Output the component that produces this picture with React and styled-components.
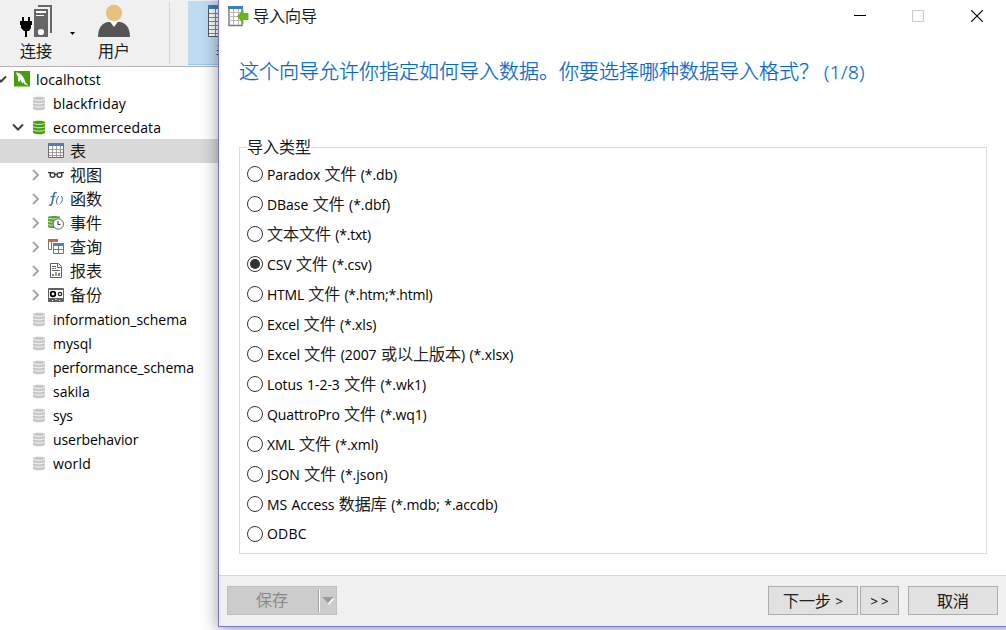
import React from 'react';
import styled, { createGlobalStyle, css } from 'styled-components';

const GlobalStyle = createGlobalStyle`
  * { box-sizing: border-box; }
  html, body { margin: 0; padding: 0; overflow: hidden; }
  body {
    font-family: "Open Sans", "Noto Sans CJK SC", sans-serif;
    font-size: 16px;
    color: #000;
    background: #fff;
  }
  svg { display: block; flex: none; }
`;

const hanWeight = css`
  font-weight: 300;
  -webkit-text-stroke: 0.25px currentColor;
`;

const Desktop = styled.div`
  position: relative;
  width: 1006px;
  height: 630px;
  overflow: hidden;
  background: #fff;
`;

const Toolbar = styled.header`
  display: flex;
  height: 67px;
  background: #f0f0f0;
  border-bottom: 1px solid #b4b4b4;
`;

const ToolButton = styled.div`
  display: flex;
  flex-direction: column;
  align-items: center;
  width: ${(p) => p.$width}px;
  padding-top: 4px;
  padding-left: ${(p) => p.$shift || 0}px;
  flex: none;
  ${(p) => p.$active && css`
    align-items: flex-start;
    height: 64px;
    margin-top: 1px;
    padding: 4px 0 0 20px;
    background: #bfdcf3;
    border-bottom: 1px solid #90c8f6;
  `}
`;

const ToolLabel = styled.span`
  height: 24px;
  margin-top: 1px;
  margin-left: ${(p) => p.$indent || 0}px;
  font-size: 16px;
  ${hanWeight}
  line-height: 24px;
`;

const DropArrow = styled.div`
  width: 10px;
  padding: 32px 0 0 2px;
`;

const Divider = styled.div`
  width: 1px;
  height: 62px;
  margin: 2px 18px 0 19px;
  background: #d5d5d5;
`;

const Tree = styled.nav`
  display: flex;
  flex-direction: column;
`;

const TreeRow = styled.div`
  display: flex;
  align-items: center;
  height: 24px;
  padding-left: ${(p) => p.$depth * 17}px;
  background: ${(p) => (p.$selected ? '#d9d9d9' : 'transparent')};
`;

const Lead = styled.span`
  display: flex;
  justify-content: center;
  width: 15px;
  margin-left: ${(p) => (p.$open ? -7 : -6)}px;
  margin-right: ${(p) => (p.$open ? 6 : 5)}px;
  flex: none;
`;

const IconCell = styled.span`
  display: flex;
  justify-content: center;
  width: 16px;
  margin-right: 6px;
  flex: none;
`;

const TreeLabel = styled.span`
  padding-top: ${(p) => (p.$latin ? 2 : 0)}px;
  font-size: ${(p) => (p.$latin ? 14 : 16)}px;
  ${(p) => !p.$latin && hanWeight}
  letter-spacing: ${(p) => p.$track || 0}px;
  line-height: 22px;
  white-space: nowrap;
`;

const Dialog = styled.section`
  position: absolute;
  left: 218px;
  top: -2px;
  display: flex;
  flex-direction: column;
  width: 800px;
  height: 629px;
  background: #fff;
  border: 1px solid #7575d3;
  box-shadow: 0 3px 16px rgba(0, 0, 0, 0.4);
`;

const TitleBar = styled.div`
  display: flex;
  align-items: flex-start;
  height: 35px;
  padding: 7px 0 0 9px;
`;

const Title = styled.span`
  flex: none;
  width: 600px;
  margin-left: 4px;
  font-size: 16px;
  ${hanWeight}
  line-height: 20px;
`;

const WindowControls = styled.div`
  display: flex;
  gap: 46px;
  margin-left: 1px;
  padding-top: 4px;
  & > :last-child { margin-left: 1px; }
`;

const Heading = styled.h1`
  margin: 22px 0 0 20px;
  height: 32px;
  font-size: 20px;
  ${hanWeight}
  line-height: 32px;
  color: #0066cc;
  white-space: nowrap;
`;

const HeadingStep = styled.span`
  margin-left: 5px;
  font-size: 19px;
  letter-spacing: 0.5px;
`;

const GroupBox = styled.fieldset`
  width: 748px;
  height: 418px;
  margin: 48px 0 0 20px;
  padding: 1px 0 0 7px;
  border: 1px solid #dcdcdc;
`;

const GroupLegend = styled.legend`
  height: 22px;
  padding: 0;
  font-size: 16px;
  ${hanWeight}
  line-height: 22px;
`;

const Option = styled.label`
  display: flex;
  align-items: center;
  height: 30px;
  white-space: nowrap;
`;

const Radio = styled.span`
  display: flex;
  align-items: center;
  justify-content: center;
  width: 16px;
  height: 16px;
  margin-right: 4px;
  flex: none;
  border: 1px solid #333;
  border-radius: 50%;
  background: #fff;
  &::after {
    content: "";
    width: 10px;
    height: 10px;
    border-radius: 50%;
    background: ${(p) => (p.$checked ? '#333' : 'transparent')};
  }
`;

const OptionText = styled.span`
  font-size: 14px;
  line-height: 24px;
  letter-spacing: ${(p) => p.$track || 0}px;
  word-spacing: 0.8px;
  white-space: pre;
`;

const Han = styled.span`
  font-size: 16px;
  ${hanWeight}
  letter-spacing: 0;
`;

const Footer = styled.footer`
  display: flex;
  align-items: flex-start;
  height: 51px;
  margin-top: auto;
  padding: 10px 0 0 8px;
  background: #f0f0f0;
  border-top: 1px solid #d5d5d5;
`;

const Button = styled.div`
  display: flex;
  align-items: center;
  justify-content: center;
  width: ${(p) => p.$width}px;
  height: 29px;
  margin-left: ${(p) => p.$gap || 0}px;
  padding-top: 1px;
  flex: none;
  font-size: 16px;
  ${hanWeight}
  line-height: 27px;
  background: #e1e1e1;
  border: 1px solid #adadad;
  white-space: pre;
`;

const SplitButton = styled(Button)`
  justify-content: flex-start;
  padding-top: 0;
  color: #838383;
  background: #ccc;
  border-color: #bfbfbf;
`;

const SplitLabel = styled.span`
  width: 90px;
  padding-right: 2px;
  text-align: center;
`;

const SplitArrow = styled.span`
  display: flex;
  align-items: center;
  height: 23px;
  padding-left: 3px;
  border-left: 1px solid #a0a0a0;
  box-shadow: inset 1px 0 0 #fff;
`;

const Small = styled.span`
  padding-top: 1px;
  font-size: 13px;
  letter-spacing: ${(p) => p.$track || 0}px;
  margin-right: ${(p) => -(p.$track || 0)}px;
`;

const ConnectIcon = () => (
  <svg width="34" height="34" viewBox="0 0 34 34">
    <path d="M20 1h14v28h-2V3H20z" fill="#666" />
    <path d="M16 5h14v28H16z" fill="#666" />
    <path d="M18 7h10v2H18zM18 11h8v1h-8z" fill="#fff" />
    <circle cx="23" cy="28" r="3.1" fill="#fff" />
    <path d="M4 13h2v4h4v-4h2v4h2v4h-1v3l-2 3H9v6H7v-6H6l-3-3v-3H2v-4h2z" fill="#000" />
  </svg>
);

const UserIcon = () => (
  <svg width="34" height="34" viewBox="0 0 34 34">
    <path d="M1 33c0-9 4-14 10-15h12c6 1 10 6 10 15z" fill="#555" />
    <path d="M12.500 17h9L17 23z" fill="#fff" />
    <circle cx="17" cy="9" r="8.200" fill="#e5c37f" />
  </svg>
);

const BigTableIcon = () => (
  <svg width="34" height="33" viewBox="0 0 34 33">
    <path d="M.5.5h33v31H.5z" fill="#fff" stroke="#555" />
    <path d="M0 0h34v4H0z" fill="#3d7ab5" />
    <path d="M1 8.500h32M1 12.500h32M1 16.500h32M1 20.500h32M1 24.500h32M1 28.500h32M7.500 4v27M15.500 4v27M23.500 4v27" stroke="#888" />
  </svg>
);

const Chevron = ({ open }) =>
  open ? (
    <svg width="12" height="8" viewBox="0 0 12 8">
      <path d="M1 1.500l5 5 5-5" fill="none" stroke="#404040" strokeWidth="2" />
    </svg>
  ) : (
    <svg width="8" height="12" viewBox="0 0 8 12">
      <path d="M1 1l5 5-5 5" fill="none" stroke="#a6a6a6" strokeWidth="2" />
    </svg>
  );

const ServerIcon = () => (
  <svg width="16" height="16" viewBox="0 0 16 16">
    <path d="M0 0h16v15.500H0z" fill="#43a008" />
    <path d="M2 1.500c3 .2 5 1.200 6.500 3.500 1.500 2.200 2.500 4.500 3 6.500l3 3-4-1.200-1-2.300-1 1.500c-1-1.300-1.800-2.500-2-4l-1.500 3C3.800 10 4 8 4.200 6.500 3.500 5 2.500 3.500 2 1.500z" fill="#fff" />
  </svg>
);

const DbIcon = ({ color, line }) => (
  <svg width="12" height="15" viewBox="0 0 12 15">
    <path d="M0 2.300C0 .3 12 .3 12 2.300v10C12 15 0 15 0 12.300z" fill={color} />
    <path d="M0 3.200c1.500 1.600 10.500 1.600 12 0M0 6.500c1.500 1.700 10.500 1.700 12 0M0 9.800c1.500 1.700 10.500 1.700 12 0" fill="none" stroke={line} strokeWidth=".9" />
  </svg>
);

const TableIcon = () => (
  <svg width="16" height="16" viewBox="0 0 16 16">
    <path d="M.5.5h15v14H.5z" fill="#fff" stroke="#6c6c6c" />
    <path d="M0 0h16v3H0z" fill="#4a80bb" />
    <path d="M1 6.500h14M1 9.500h14M1 12.500h14M4.500 3v11M8.500 3v11M12.500 3v11" stroke="#8c8c8c" strokeWidth=".8" />
  </svg>
);

const ViewIcon = () => (
  <svg width="16" height="16" viewBox="0 0 16 16">
    <g fill="none" stroke="#303030" strokeWidth="1.300">
      <circle cx="4.500" cy="8" r="2.400" />
      <circle cx="11.500" cy="8" r="2.400" />
      <path d="M7 7.500q1-.8 2 0M0 5.700h3M16 5.700h-3" />
    </g>
  </svg>
);

const FunctionIcon = () => (
  <svg width="16" height="16" viewBox="0 0 16 16">
    <g fill="none" stroke="#3c6b9e" strokeWidth="1.200">
      <path d="M8.800 2C7 .7 6 2.300 5.600 4.300L4.100 12c-.4 2-1.700 2.800-3 1.700" strokeWidth="1.500" />
      <path d="M2.500 5.500h5" />
      <path d="M10.800 5c-2.300 2.500-2.800 5.500-1.700 8.300M13.300 5c1.800 2.800 1.200 5.700-1.500 8.300" strokeWidth="1" />
    </g>
  </svg>
);

const EventIcon = () => (
  <svg width="16" height="16" viewBox="0 0 16 16">
    <path d="M0 2C0 .7 12 .7 12 2v10c-3 1.700-12 1-12 0z" fill="#58a335" />
    <path d="M0 3.300q5 1.600 12 0M0 6.500q4 1.500 9 0M0 9.500q3 1.300 6 .5" fill="none" stroke="#e8f4e2" strokeWidth=".8" />
    <circle cx="10.300" cy="9" r="5.200" fill="#fff" stroke="#686868" />
    <path d="M10 6v3.500h2.500" fill="none" stroke="#333" />
  </svg>
);

const QueryIcon = () => (
  <svg width="16" height="16" viewBox="0 0 16 16">
    <path d="M.5.5h9v10h-9zM3.500 3v7" fill="#fff" stroke="#777" />
    <path d="M0 0h10v3H0z" fill="#d9603f" />
    <path d="M4 3h12v13H4z" fill="#fff" />
    <path d="M5.500 5.500h10v9h-10zM5.500 10.500h10M10.500 6v8" fill="none" stroke="#777" />
    <path d="M5 4h11v3H5z" fill="#4b82bd" />
  </svg>
);

const ReportIcon = () => (
  <svg width="16" height="16" viewBox="0 0 16 16">
    <path d="M2.500.5h8l3 3v11h-11z" fill="#fff" stroke="#5f5f5f" />
    <path d="M9.500 1v3.500h4M4 3.500h4M4 5.500h2M7 5.500h1M4 7.500h8" fill="none" stroke="#5f5f5f" />
    <path d="M4 11h2v2H4z" fill="#4b82bd" />
    <path d="M7 9h2v4H7z" fill="#e08a3c" />
    <path d="M10 10h2v3h-2z" fill="#4b82bd" />
  </svg>
);

const BackupIcon = () => (
  <svg width="16" height="16" viewBox="0 0 16 16">
    <rect x="0" y="1" width="16" height="14" rx="1" fill="#606060" />
    <path d="M1 3h14v8H1z" fill="#fff" />
    <circle cx="5" cy="7" r="2.300" fill="#fff" stroke="#000" strokeWidth="1.800" />
    <circle cx="12" cy="7" r="1.700" fill="#fff" stroke="#222" strokeWidth="1.200" />
    <path d="M4 13h1v1H4zM7.500 12h1v1h-1zM11 13h1v1h-1z" fill="#fff" />
  </svg>
);

const ImportIcon = () => (
  <svg width="21" height="21" viewBox="0 0 21 21">
    <path d="M1 1h13v18.500H1z" fill="#fff" stroke="#7c7c7c" strokeWidth="1.500" />
    <path d="M1 6.500h13M1 10.500h13M1 14.500h13M5.500 3v16M10.500 3v16" stroke="#b8b8b8" />
    <path d="M0 0h15v3H0z" fill="#3d7fb9" />
    <path d="M9 10.200l6.500-7.200v4h5v7h-5v4z" fill="#69b51e" />
  </svg>
);

const databaseIcon = <DbIcon color="#c8c8c8" line="#f8f8f8" />;

const treeItems = [
  { depth: 0, label: 'localhotst', icon: <ServerIcon />, open: true, latin: true, track: 0.12 },
  { depth: 1, label: 'blackfriday', icon: databaseIcon, latin: true, track: 0.16 },
  { depth: 1, label: 'ecommercedata', icon: <DbIcon color="#43a008" line="#e4f3da" />, open: true, latin: true, track: 0.15 },
  { depth: 2, label: '表', icon: <TableIcon />, selected: true },
  { depth: 2, label: '视图', icon: <ViewIcon />, closed: true },
  { depth: 2, label: '函数', icon: <FunctionIcon />, closed: true },
  { depth: 2, label: '事件', icon: <EventIcon />, closed: true },
  { depth: 2, label: '查询', icon: <QueryIcon />, closed: true },
  { depth: 2, label: '报表', icon: <ReportIcon />, closed: true },
  { depth: 2, label: '备份', icon: <BackupIcon />, closed: true },
  { depth: 1, label: 'information_schema', icon: databaseIcon, latin: true },
  { depth: 1, label: 'mysql', icon: databaseIcon, latin: true },
  { depth: 1, label: 'performance_schema', icon: databaseIcon, latin: true, track: -0.04 },
  { depth: 1, label: 'sakila', icon: databaseIcon, latin: true },
  { depth: 1, label: 'sys', icon: databaseIcon, latin: true, track: -0.2 },
  { depth: 1, label: 'userbehavior', icon: databaseIcon, latin: true, track: -0.08 },
  { depth: 1, label: 'world', icon: databaseIcon, latin: true, track: 0.15 },
];

const formats = [
  { label: 'Paradox 文件 (*.db)', track: -0.12 },
  { label: 'DBase 文件 (*.dbf)', track: -0.05 },
  { label: '文本文件 (*.txt)', track: -0.2 },
  { label: 'CSV 文件 (*.csv)', checked: true, track: -0.08 },
  { label: 'HTML 文件 (*.htm;*.html)', track: -0.24 },
  { label: 'Excel 文件 (*.xls)', track: -0.15 },
  { label: 'Excel 文件 (2007 或以上版本) (*.xlsx)', track: -0.06 },
  { label: 'Lotus 1-2-3 文件 (*.wk1)', track: -0.06 },
  { label: 'QuattroPro 文件 (*.wq1)', track: -0.12 },
  { label: 'XML 文件 (*.xml)', track: -0.1 },
  { label: 'JSON 文件 (*.json)' },
  { label: 'MS Access 数据库 (*.mdb; *.accdb)', track: -0.08 },
  { label: 'ODBC', track: 0.2 },
];

const mixed = (text) =>
  text
    .split(/([\u4e00-\u9fff]+)/)
    .filter(Boolean)
    .map((part, i) => (/[\u4e00-\u9fff]/.test(part) ? <Han key={i}>{part}</Han> : part));

export default function App() {
  return (
    <Desktop>
      <GlobalStyle />
      <Toolbar>
        <ToolButton $width={68} $shift={2}>
          <ConnectIcon />
          <ToolLabel $indent={2}>连接</ToolLabel>
        </ToolButton>
        <DropArrow>
          <svg width="5" height="3" viewBox="0 0 5 3"><path d="M0 0h5L2.500 3z" fill="#000" /></svg>
        </DropArrow>
        <ToolButton $width={72}>
          <UserIcon />
          <ToolLabel>用户</ToolLabel>
        </ToolButton>
        <Divider />
        <ToolButton $width={72} $active>
          <BigTableIcon />
          <ToolLabel $indent={8}>表</ToolLabel>
        </ToolButton>
      </Toolbar>
      <Tree>
        {treeItems.map((item) => (
          <TreeRow key={item.label} $depth={item.depth} $selected={item.selected}>
            <Lead $open={item.open}>{(item.open || item.closed) && <Chevron open={item.open} />}</Lead>
            <IconCell>{item.icon}</IconCell>
            <TreeLabel $latin={item.latin} $track={item.track}>{item.label}</TreeLabel>
          </TreeRow>
        ))}
      </Tree>
      <Dialog>
        <TitleBar>
          <ImportIcon />
          <Title>导入向导</Title>
          <WindowControls>
            <svg width="12" height="12" viewBox="0 0 12 12"><path d="M0 5.500h12" stroke="#000" /></svg>
            <svg width="12" height="12" viewBox="0 0 12 12"><path d="M.5.5h11v11H.5z" fill="none" stroke="#ccc" /></svg>
            <svg width="12" height="12" viewBox="0 0 12 12"><path d="M0 0l12 12M12 0L0 12" stroke="#000" strokeWidth="1.100" /></svg>
          </WindowControls>
        </TitleBar>
        <Heading>
          这个向导允许你指定如何导入数据。你要选择哪种数据导入格式？<HeadingStep>(1/8)</HeadingStep>
        </Heading>
        <GroupBox>
          <GroupLegend>导入类型</GroupLegend>
          {formats.map((format) => (
            <Option key={format.label}>
              <Radio $checked={format.checked} />
              <OptionText $track={format.track}>{mixed(format.label)}</OptionText>
            </Option>
          ))}
        </GroupBox>
        <Footer>
          <SplitButton $width={110}>
            <SplitLabel>保存</SplitLabel>
            <SplitArrow>
              <svg width="13" height="8" viewBox="0 0 13 8">
                <path d="M1.500 1.500h11l-5.500 6z" fill="#fff" />
                <path d="M0 0h11.500L6 6.200z" fill="#9a9a9a" />
              </svg>
            </SplitArrow>
          </SplitButton>
          <Button $width={90} $gap={431}>下一步<Small $track={1}>{' >'}</Small></Button>
          <Button $width={39} $gap={2}><Small $track={3}>&gt;&gt;</Small></Button>
          <Button $width={90} $gap={9}>取消</Button>
        </Footer>
      </Dialog>
    </Desktop>
  );
}
